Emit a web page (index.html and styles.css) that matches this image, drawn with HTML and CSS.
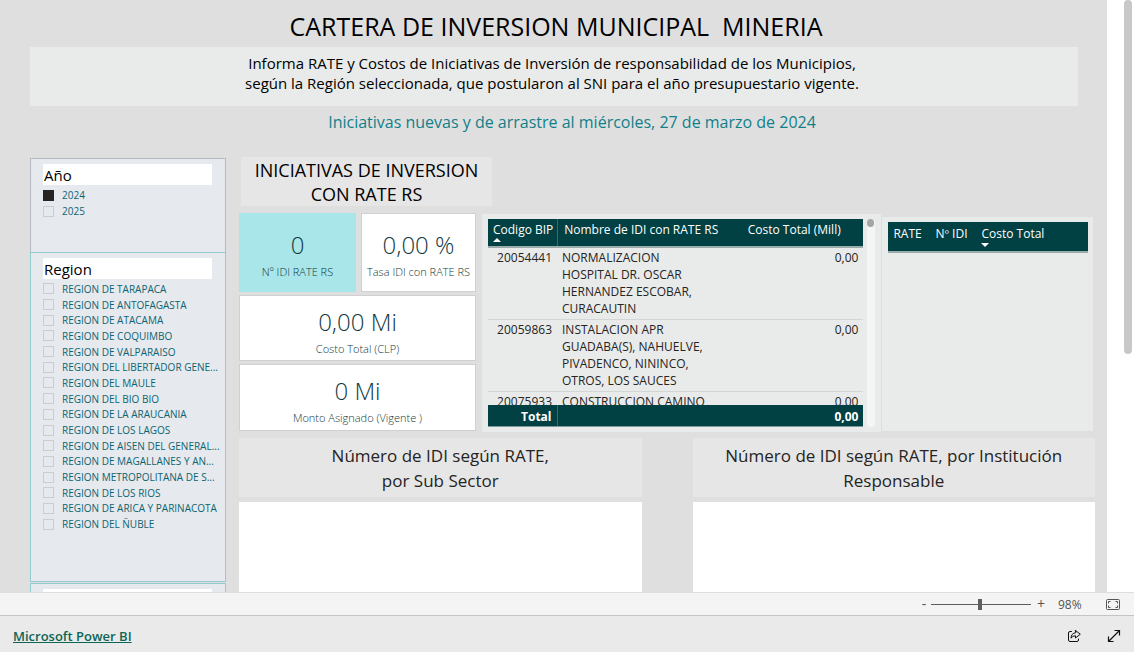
FILE: index.html
```html
<!DOCTYPE html>
<html lang="es">
<head>
<meta charset="utf-8">
<title>Cartera de inversion municipal</title>
<link rel="stylesheet" href="styles.css">
</head>
<body>
<main class="viewport">
  <div class="report">
    <header class="report-header">
      <h1 class="title">CARTERA DE INVERSION MUNICIPAL &nbsp;MINERIA</h1>
      <p class="intro">Informa RATE y Costos de Iniciativas de Inversión de responsabilidad de los Municipios,<br>según la Región seleccionada, que postularon al SNI para el año presupuestario vigente.</p>
      <p class="date">Iniciativas nuevas y de arrastre al miércoles, 27 de marzo de 2024</p>
    </header>
    <div class="columns">
      <aside class="filters">
        <section class="slicer slicer-year">
          <h2 class="slicer-title">Año</h2>
          <ul class="options">
            <li><label><input type="checkbox" checked><span>2024</span></label></li>
            <li><label><input type="checkbox"><span>2025</span></label></li>
          </ul>
        </section>
        <section class="slicer slicer-region">
          <h2 class="slicer-title">Region</h2>
          <ul class="options options-region">
            <li><label><input type="checkbox"><span>REGION DE TARAPACA</span></label></li>
            <li><label><input type="checkbox"><span>REGION DE ANTOFAGASTA</span></label></li>
            <li><label><input type="checkbox"><span>REGION DE ATACAMA</span></label></li>
            <li><label><input type="checkbox"><span>REGION DE COQUIMBO</span></label></li>
            <li><label><input type="checkbox"><span>REGION DE VALPARAISO</span></label></li>
            <li><label><input type="checkbox"><span>REGION DEL LIBERTADOR GENE...</span></label></li>
            <li><label><input type="checkbox"><span>REGION DEL MAULE</span></label></li>
            <li><label><input type="checkbox"><span>REGION DEL BIO BIO</span></label></li>
            <li><label><input type="checkbox"><span>REGION DE LA ARAUCANIA</span></label></li>
            <li><label><input type="checkbox"><span>REGION DE LOS LAGOS</span></label></li>
            <li><label><input type="checkbox"><span>REGION DE AISEN DEL GENERAL...</span></label></li>
            <li><label><input type="checkbox"><span>REGION DE MAGALLANES Y AN...</span></label></li>
            <li><label><input type="checkbox"><span>REGION METROPOLITANA DE S...</span></label></li>
            <li><label><input type="checkbox"><span>REGION DE LOS RIOS</span></label></li>
            <li><label><input type="checkbox"><span>REGION DE ARICA Y PARINACOTA</span></label></li>
            <li><label><input type="checkbox"><span>REGION DEL ÑUBLE</span></label></li>
          </ul>
        </section>
        <section class="slicer slicer-next"><div class="slicer-title"></div></section>
      </aside>
      <div class="content">
        <h2 class="section-title">INICIATIVAS DE INVERSION<br>CON RATE RS</h2>
        <div class="visuals">
          <div class="cards">
            <div class="card card-accent"><strong class="value">0</strong><span class="caption">Nº IDI RATE RS</span></div>
            <div class="card"><strong class="value">0,00 %</strong><span class="caption">Tasa IDI con RATE RS</span></div>
            <div class="card card-wide"><strong class="value">0,00 Mi</strong><span class="caption">Costo Total (CLP)</span></div>
            <div class="card card-wide"><strong class="value">0 Mi</strong><span class="caption">Monto Asignado (Vigente )</span></div>
          </div>
          <div class="panel panel-idi">
            <div class="table-frame">
              <div class="table-clip">
                <table class="grid">
                  <colgroup><col class="c-code"><col class="c-name"><col></colgroup>
                  <thead><tr><th class="first">Codigo BIP<i class="sort sort-up"></i></th><th>Nombre de IDI con RATE RS</th><th>Costo Total (Mill)</th></tr></thead>
                  <tbody>
                    <tr><td class="num">20054441</td><td>NORMALIZACION<br>HOSPITAL DR. OSCAR<br>HERNANDEZ ESCOBAR,<br>CURACAUTIN</td><td class="num">0,00</td></tr>
                    <tr><td class="num">20059863</td><td>INSTALACION APR<br>GUADABA(S), NAHUELVE,<br>PIVADENCO, NININCO,<br>OTROS, LOS SAUCES</td><td class="num">0,00</td></tr>
                    <tr><td class="num">20075933</td><td>CONSTRUCCION CAMINO</td><td class="num">0,00</td></tr>
                  </tbody>
                </table>
              </div>
              <table class="grid grid-total">
                <colgroup><col class="c-code"><col class="c-name"><col></colgroup>
                <tbody><tr><td class="num">Total</td><td></td><td class="num">0,00</td></tr></tbody>
              </table>
            </div>
            <div class="scroll-track"><div class="scroll-dot"></div></div>
          </div>
          <div class="panel panel-rate">
            <table class="grid grid-rate">
              <colgroup><col class="c-rate"><col class="c-idi"><col></colgroup>
              <thead><tr><th>RATE</th><th>Nº IDI</th><th>Costo Total<i class="sort sort-down"></i></th></tr></thead>
            </table>
          </div>
        </div>
        <div class="charts">
          <section class="chart"><h2 class="chart-title">Número de IDI según RATE,<br>por Sub Sector</h2><div class="plot"></div></section>
          <section class="chart"><h2 class="chart-title">Número de IDI según RATE, por Institución<br>Responsable</h2><div class="plot"></div></section>
        </div>
      </div>
    </div>
  </div>
  <div class="page-scroll"><div class="page-thumb"></div></div>
</main>
<div class="zoombar">
  <button class="zoom-step" type="button" aria-label="Alejar">-</button>
  <input class="zoom-range" type="range" min="0" max="100" value="49" aria-label="Zoom">
  <button class="zoom-step zoom-in" type="button" aria-label="Acercar">+</button>
  <span class="zoom-value">98%</span>
  <button class="icon-button" type="button" aria-label="Ajustar a la página">
    <svg width="14" height="11" viewBox="0 0 14 11" fill="none" stroke="#555"><rect x=".5" y=".5" width="13" height="10" rx="1"/><path d="M2.500 4.500V2.500H4.500M9.500 2.500H11.500V4.500M11.500 6.500V8.500H9.500M4.500 8.500H2.500V6.500"/></svg>
  </button>
</div>
<footer class="footer">
  <a class="brand" href="#">Microsoft Power BI</a>
  <button class="icon-button" type="button" aria-label="Compartir">
    <svg width="14" height="14" viewBox="0 0 14 14" fill="none" stroke="#111" stroke-linejoin="round" stroke-linecap="round"><path d="M4.500 2.500H3Q1.500 2.500 1.500 4V11Q1.500 12.500 3 12.500H10Q11.500 12.500 11.500 11V10"/><path d="M8.500 1.500L13.300 5.200L8.500 9V6.800Q5.500 6.500 4 9.200Q4.200 4.200 8.500 3.700Z"/></svg>
  </button>
  <button class="icon-button" type="button" aria-label="Pantalla completa">
    <svg width="14" height="14" viewBox="0 0 14 14" fill="none" stroke="#111" stroke-width="1.200"><path d="M1.500 12.500L12.500 1.500M7.500 1.500H12.500V6.500M1.500 7.500V12.500H6.500"/></svg>
  </button>
</footer>
</body>
</html>
```
FILE: styles.css
```css
* { box-sizing: border-box; }
body {
  margin: 0;
  height: 100vh;
  display: flex;
  flex-direction: column;
  overflow: hidden;
  background: #fff;
  color: #000;
  font-family: "Open Sans", "Noto Sans", sans-serif;
}
h1, h2, p, ul { margin: 0; padding: 0; font-weight: 400; }
ul { list-style: none; }
button { border: 0; padding: 0; background: none; font: inherit; }

.viewport { flex: 1; min-height: 0; display: flex; overflow: hidden; }
.report { flex: 1; min-width: 0; background: #dfdfdf; padding: 0 12px 0 30px; }
.page-scroll { width: 27px; padding-left: 17px; }
.page-thumb { width: 8px; height: 354px; border-radius: 4px; background: #c8c8c8; }

.report-header { margin-right: 17px; text-align: center; }
.title { font-size: 25px; line-height: 34px; padding: 9px 0 4px 4px; }
.intro { background: #e9ebea; font-size: 15px; line-height: 20px; padding: 6px 4px 13px 0; }
.date { color: #117f8a; font-size: 16px; line-height: 24px; padding: 4px 0 24px 36px; }

.columns { display: flex; gap: 13px; align-items: flex-start; }
.filters { width: 196px; flex: none; }
.slicer { background: #e6e9ee; border: 1px solid #94cbcf; padding: 5px 3px 0 12px; overflow: hidden; }
.slicer-year { height: 94px; border-color: #b3b8c1; border-bottom: 0; }
.slicer-region { height: 330px; }
.slicer-next { height: 60px; margin-top: 1px; }
.slicer-title { background: #fff; width: 169px; height: 21px; font-size: 15px; line-height: 22px; padding-left: 1px; margin-bottom: 2px; }
.options { display: flex; flex-direction: column; height: 32px; }
.options-region { height: 251px; }
.options li { flex: 1; min-height: 0; display: flex; align-items: center; }
.options label { display: flex; align-items: center; gap: 8px; font-size: 10px; line-height: 14px; color: #0c6470; white-space: nowrap; }
.options input { appearance: none; flex: none; width: 11px; height: 11px; margin: 0; border: 1px solid #cbcdcf; }
.options input:checked { background: #252423; border-color: #252423; }

.content { flex: 1; min-width: 0; margin-top: -1px; }
.section-title { background: #e6e6e6; width: 251px; margin-left: 2px; margin-bottom: 7px; height: 49px; font-size: 18px; line-height: 24px; padding-top: 1px; text-align: center; white-space: nowrap; }
.visuals { display: flex; height: 219px; gap: 6px; margin-bottom: 6px; }

.cards { width: 237px; flex: none; display: grid; grid-template-columns: 117px 1fr; grid-template-rows: 79px 66px 67px; row-gap: 3px; column-gap: 5px; }
.card { background: #fff; border: 1px solid #d0d0d0; display: flex; flex-direction: column; align-items: center; justify-content: center; padding-top: 8px; color: #12393d; white-space: nowrap; }
.card-accent { background: #a8e6ea; border-color: #a8e6ea; }
.card-wide { grid-column: span 2; padding-top: 11px; }
.value { font-size: 24px; line-height: 30px; font-weight: 300; }
.caption { font-size: 11px; line-height: 24px; font-weight: 300; }

.panel { background: #e9ebea; overflow: hidden; }
.panel-idi { flex: 400; display: flex; gap: 4px; padding: 5px 6px; margin-top: 1px; }
.panel-rate { flex: 206; padding: 5px 5px 5px 6px; margin: 4px 2px 1px -5px; }
.table-frame { flex: 1; min-width: 0; display: flex; flex-direction: column; }
.table-clip { height: 187px; overflow: hidden; }
.grid { width: 100%; border-collapse: collapse; table-layout: fixed; font-size: 12px; color: #252423; }
.c-code { width: 69px; }
.c-name { width: 168px; }
.grid th { position: relative; background: #014043; color: #fff; font-weight: 400; height: 28px; line-height: 16px; padding: 3px 5px; vertical-align: top; text-align: center; white-space: nowrap; border-bottom: 2px solid #9aabac; }
.grid .first { border-right: 1px solid #37686a; }
.grid td { line-height: 17px; padding: 1px 5px 2px; vertical-align: top; border-bottom: 1px solid #d3d6d6; white-space: nowrap; }
.grid .num { text-align: right; }
.grid-total td { background: #014043; color: #fff; font-weight: 700; height: 22px; padding: 3px 5px 1px; border-bottom: 1px solid #7f9a9c; }
.grid-total td:first-child { border-right: 1px solid #37686a; }
.sort { position: absolute; left: 5px; bottom: 4px; border: 4px solid transparent; }
.sort-up { border-top: 0; border-bottom-color: #fff; }
.sort-down { border-bottom: 0; border-top-color: #fff; }
.grid-rate th { height: 30px; padding: 4px 5px; text-align: left; }
.c-rate { width: 42px; }
.c-idi { width: 46px; }
.scroll-track { width: 8px; background: #f5f5f5; border-radius: 4px; }
.scroll-dot { width: 7px; height: 8px; border-radius: 4px; background: #a5a5a5; }

.charts { display: grid; grid-template-columns: 1fr 1fr; gap: 51px; }
.chart-title { background: #e6e6e6; height: 59px; font-size: 17px; line-height: 25px; padding-top: 5px; text-align: center; color: #252423; white-space: nowrap; margin-bottom: 5px; }
.plot { background: #fff; height: 200px; }

.zoombar { height: 23px; flex: none; display: flex; align-items: center; justify-content: flex-end; padding-right: 14px; background: #f4f4f4; border-top: 1px solid #dedede; color: #555; font-size: 12px; }
.zoom-step { width: 14px; font-size: 14px; line-height: 20px; color: #555; }
.zoom-in { width: 20px; }
.zoom-range { appearance: none; width: 100px; height: 11px; margin: 0; background: linear-gradient(#605e5c, #605e5c) center / 100% 1px no-repeat; }
.zoom-range::-webkit-slider-thumb { appearance: none; width: 4px; height: 11px; background: #605e5c; }
.zoom-value { width: 32px; margin-left: 7px; }
.icon-button { display: flex; align-items: center; }
.zoombar .icon-button { margin-left: 16px; }
.footer { height: 37px; flex: none; display: flex; align-items: center; gap: 26px; padding: 4px 13px 0; background: #eaeaea; border-top: 1px solid #c4c4c4; }
.brand { margin-right: auto; color: #0d6555; font-size: 13px; font-weight: 600; text-decoration: underline; }
```
